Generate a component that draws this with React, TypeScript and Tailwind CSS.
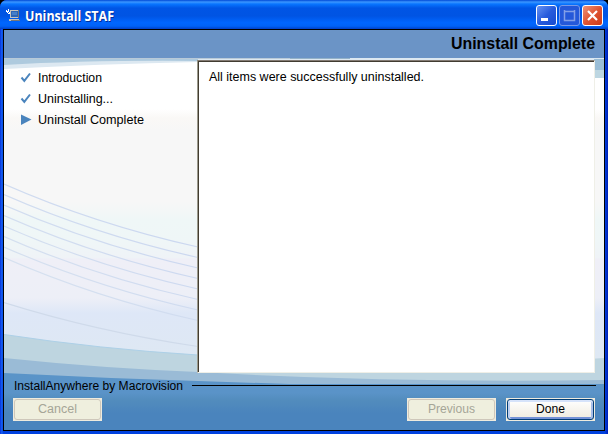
import React from 'react';

const curves = [184, 194.5, 205, 215.5, 226, 236.5, 247, 257.5];

function Backdrop() {
  return (
    <svg className="absolute inset-0 h-full w-full" viewBox="4 30 600 400" preserveAspectRatio="none" aria-hidden="true">
      <defs>
        <linearGradient id="page" gradientUnits="userSpaceOnUse" x1="0" y1="58" x2="0" y2="358">
          <stop offset="0" stopColor="#fff" />
          <stop offset=".17" stopColor="#fff" />
          <stop offset=".2" stopColor="#faf8f6" />
          <stop offset=".24" stopColor="#f7f7f7" />
          <stop offset=".48" stopColor="#f7f7f7" />
          <stop offset=".54" stopColor="#eff7f7" />
          <stop offset=".61" stopColor="#eff6f7" />
          <stop offset=".665" stopColor="#eff3f7" />
          <stop offset=".67" stopColor="#efeff7" />
          <stop offset=".8" stopColor="#edeff7" />
          <stop offset=".85" stopColor="#dee7f7" />
          <stop offset="1" stopColor="#dee8f3" />
        </linearGradient>
        <linearGradient id="deep" gradientUnits="userSpaceOnUse" x1="0" y1="373" x2="0" y2="430">
          <stop offset="0" stopColor="#5a94c8" />
          <stop offset=".35" stopColor="#5a93c8" />
          <stop offset=".48" stopColor="#528cbd" />
          <stop offset=".7" stopColor="#4a84bd" />
          <stop offset="1" stopColor="#4a84bd" />
        </linearGradient>
        <linearGradient id="stroke" gradientUnits="userSpaceOnUse" x1="4" y1="330" x2="100" y2="200">
          <stop offset="0" stopColor="#dce6ef" />
          <stop offset="1" stopColor="#ccd8f0" />
        </linearGradient>
      </defs>
      <rect x="4" y="30" width="600" height="400" fill="url(#page)" />
      <rect x="4" y="30" width="600" height="28" fill="#6b94c6" />
      <path d="M4 58H604V78H594V62H198Q100 64 4 69Z" fill="#dce8f1" />
      <path d="M4 59H198V61Q90 60 4 65Z" fill="#aecade" />
      <path d="M594 59H604V70H594Z" fill="#9abdd6" />
      <path d="M594 70H604V78H594Z" fill="#bdd6e1" />
      <path d="M4 58.5H290" stroke="#b9cad8" />
      <path d="M290 58.5H350" stroke="#94b2c9" />
      <g fill="none" stroke="url(#stroke)" strokeWidth="1.2">
        {curves.map((y) => (
          <path key={y} d={`M4 ${y}Q95 ${y + 40} 198 ${y + 63}`} />
        ))}
        <path d="M4 302.5Q95 331 198 346.5" stroke="#cfdaea" />
      </g>
      <path d="M4 334.5Q100 349 198 355Q400 373 604 358V430H4Z" fill="#bed5e0" />
      <path d="M4 334.5Q100 349 198 355" fill="none" stroke="#add0e7" />
      <path d="M4 358Q100 368 198 372Q390 383 604 380V430H4Z" fill="#9abbd6" />
      <path d="M4 373Q100 378 198 381L290 384H604V430H4Z" fill="url(#deep)" />
    </svg>
  );
}

function ComputerIcon() {
  return (
    <svg className="h-4 w-4 shrink-0" viewBox="0 0 16 16" shapeRendering="crispEdges" aria-hidden="true">
      <path d="M4 2h9v8H4zM3 11h10v2H3z" fill="#c6c3bd" />
      <path d="M5 3h7v6H5z" fill="#2d65b5" />
      <path d="M6 4h5v3H6z" fill="#467ec8" />
      <path d="M12 2h1v8h-1zM5 12h9v1H5z" fill="#777" />
      <path d="M0 2h1v1h1v2h1v1H2V5H1V4H0zM2 1h1v3h1v2H3V4H2z" fill="#fff" />
    </svg>
  );
}

function Check() {
  return (
    <svg className="h-3 w-3 shrink-0" viewBox="0 0 12 12" aria-hidden="true">
      <path d="M1.5 5.5L4.3 8.8L10 1.5" fill="none" stroke="#4a84bd" strokeWidth="2" />
    </svg>
  );
}

function Label({ children, width, className = '' }: { children: string; width: number; className?: string }) {
  return (
    <svg className={`block h-4 shrink-0 overflow-visible ${className}`} width={width} aria-hidden="true">
      <text x="0" y="12" textLength={width} lengthAdjust="spacingAndGlyphs" fill="currentColor">{children}</text>
    </svg>
  );
}

function WindowButton({ kind }: { kind: 'min' | 'max' | 'close' }) {
  const colors = {
    min: 'border-white bg-linear-to-br from-[#6792f2] via-[#285bdc] to-[#174bd0]',
    max: 'border-[#7999e7] bg-[#2458d9]',
    close: 'border-white bg-linear-to-br from-[#ed9277] via-[#df5432] to-[#cb3a16]',
  };
  return (
    <button aria-label={kind} className={`h-[21px] w-[21px] rounded-[3px] border ${colors[kind]}`}>
      <svg className="h-[19px] w-[19px]" viewBox="0 0 19 19" fill="none">
        {kind === 'min' && <path d="M4 13.5h7" stroke="white" strokeWidth="3" />}
        {kind === 'max' && <path d="M4.5 4v10.5h10V4M4 5.5h11" stroke="#829fe7" strokeWidth="1.5" />}
        {kind === 'close' && <path d="M5 5l9 9M14 5l-9 9" stroke="white" strokeWidth="2.2" />}
      </svg>
    </button>
  );
}

function ActionButton({ label, width, primary = false }: { label: string; width: number; primary?: boolean }) {
  return (
    <button className="h-[23px] w-[89px] bg-[#efebde] p-px" disabled={!primary}>
      <span className={`flex h-[21px] items-center justify-center rounded-[3px] border ${primary ? 'border-[#003c74] bg-linear-to-b from-white to-[#efebde] text-black shadow-[inset_0_2px_0_#d6e3fa,inset_2px_0_0_#bdcff0,inset_-2px_0_0_#a5bce7,inset_0_-2px_0_#7391d6]' : 'border-[#cec7ba] bg-[#efefde] text-[#a5a597]'}`}>
        <Label width={width} className="-translate-y-px">{label}</Label>
      </span>
    </button>
  );
}

export default function App() {
  return (
    <div className="bg-black font-['Liberation_Sans',Arial,sans-serif] text-[12.5px] text-black">
      <main className="flex h-[434px] w-[608px] flex-col overflow-hidden rounded-t-[7px] bg-[#0041e7]">
        <header className="flex h-[29px] shrink-0 items-center bg-[linear-gradient(180deg,#0049d6_0%,#3b96ff_7%,#0875ff_14%,#0055e5_28%,#0054e3_55%,#0066ff_78%,#0062f7_90%,#0040c8_100%)] pr-[5px] pl-[6px] pt-[2px]">
          <ComputerIcon />
          <h1 className="ml-[3px] h-4 font-['Open_Sans','Noto_Sans',sans-serif] text-[14px] font-bold text-white [text-shadow:1px_1px_#00309b]"><Label width={89} className="translate-y-px">Uninstall STAF</Label></h1>
          <div className="ml-auto flex gap-[2px]">
            <WindowButton kind="min" /><WindowButton kind="max" /><WindowButton kind="close" />
          </div>
        </header>
        <div className="h-[405px] bg-[linear-gradient(90deg,#0831d9,#1664f5_2px,#0041df_3px,#0041df_605px,#001db5)] px-[3px] pb-[3px]">
          <div className="h-[402px] border border-black">
            <section className="relative h-[400px] w-[600px] overflow-hidden">
              <Backdrop />
              <div className="relative flex h-full flex-col">
                <h2 className="flex h-[30px] items-center justify-end pr-[9px] text-[16px] font-bold"><Label width={144}>Uninstall Complete</Label></h2>
                <div className="flex h-[313px] shrink-0">
                  <ul className="w-[193px] pt-[7px] pl-[16px]">
                    <li className="flex h-[21px] items-center gap-[6px]"><Check /><Label width={64}>Introduction</Label></li>
                    <li className="flex h-[21px] items-center gap-[6px]"><Check /><Label width={75}>Uninstalling...</Label></li>
                    <li className="flex h-[21px] items-center gap-[6px]"><svg className="h-3 w-3" viewBox="0 0 12 12"><path d="M1 .5L11.5 5.5L1 11Z" fill="#4a84bd" /></svg><Label width={106}>Uninstall Complete</Label></li>
                  </ul>
                  <article className="h-[313px] w-[398px] border border-t-[#847b73] border-r-[#efefe7] border-b-[#efefe7] border-l-[#9c9a8c] bg-white pt-[8px] pl-[11px] shadow-[inset_1px_1px_#423c31]"><Label width={215}>All items were successfully uninstalled.</Label></article>
                </div>
                <div className="flex h-[25px] items-center pr-[8px] pl-[10px]"><Label width={169}>InstallAnywhere by Macrovision</Label><div className="ml-[9px] h-px grow bg-black" /></div>
                <footer className="flex h-[23px] pr-[9px] pl-[9px]"><ActionButton label="Cancel" width={39} /><div className="ml-auto flex gap-[10px]"><ActionButton label="Previous" width={47} /><ActionButton label="Done" width={29} primary /></div></footer>
              </div>
            </section>
          </div>
        </div>
      </main>
    </div>
  );
}
